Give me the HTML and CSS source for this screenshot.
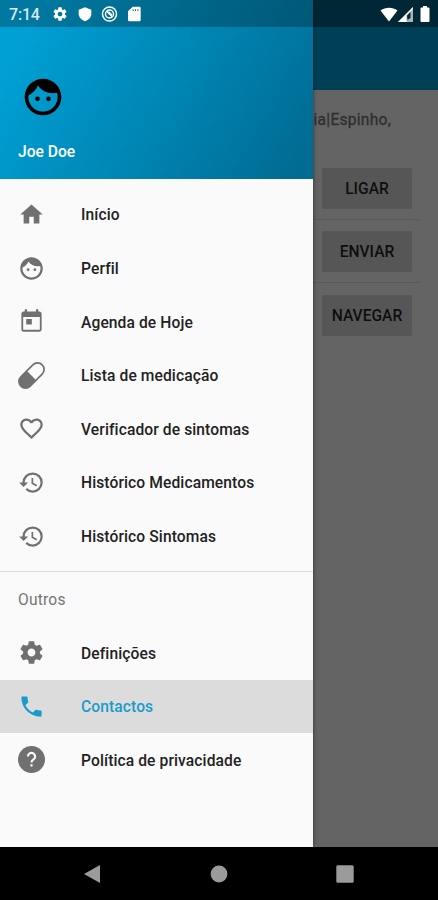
FILE: index.html
```html
<!DOCTYPE html>
<html lang="pt">
<head>
<meta charset="utf-8">
<title>Contactos</title>
<link rel="stylesheet" href="styles.css">
</head>
<body>
<svg class="defs" width="0" height="0">
  <symbol id="face" viewBox="0 0 24 24"><path d="M9 11.75a1.25 1.25 0 1 0 0 2.5 1.25 1.25 0 0 0 0-2.5zm6 0a1.25 1.25 0 1 0 0 2.5 1.25 1.25 0 0 0 0-2.5zM12 2C6.48 2 2 6.48 2 12s4.48 10 10 10 10-4.48 10-10S17.520 2 12 2zm0 18c-4.410 0-8-3.590-8-8 0-.290.020-.580.050-.860 2.360-1.050 4.230-2.980 5.210-5.370C11.070 8.330 14.050 10 17.420 10c.780 0 1.530-.090 2.250-.260.210.710.330 1.470.330 2.260 0 4.410-3.590 8-8 8z"/></symbol>
  <symbol id="gear" viewBox="0 0 24 24"><path d="M19.430 12.980c.040-.320.070-.640.070-.980s-.030-.660-.070-.980l2.110-1.650c.190-.150.240-.420.120-.640l-2-3.460c-.120-.220-.390-.300-.610-.220l-2.490 1c-.520-.400-1.080-.730-1.690-.980l-.380-2.650C14.460 2.180 14.250 2 14 2h-4c-.250 0-.460.180-.490.420l-.380 2.650c-.610.250-1.170.590-1.690.980l-2.490-1c-.230-.090-.490 0-.610.220l-2 3.460c-.130.220-.070.490.120.640l2.110 1.650c-.040.320-.070.650-.070.980s.030.660.070.980l-2.110 1.650c-.190.150-.240.420-.120.640l2 3.460c.120.220.390.300.610.220l2.490-1c.520.400 1.080.730 1.690.980l.380 2.650c.030.240.240.420.490.420h4c.250 0 .460-.180.490-.420l.380-2.650c.610-.250 1.170-.590 1.690-.980l2.490 1c.230.090.490 0 .610-.220l2-3.460c.120-.220.070-.490-.120-.640l-2.110-1.650zM12 15.500c-1.930 0-3.500-1.570-3.500-3.500s1.570-3.500 3.500-3.500 3.500 1.570 3.500 3.500-1.570 3.500-3.500 3.500z"/></symbol>
  <symbol id="history" viewBox="0 0 24 24"><path d="M13 3a9 9 0 0 0-9 9H1l3.890 3.890.070.140L9 12H6c0-3.870 3.130-7 7-7s7 3.130 7 7-3.130 7-7 7c-1.930 0-3.680-.790-4.940-2.060l-1.420 1.420A8.954 8.954 0 0 0 13 21a9 9 0 0 0 0-18zm-1 5v5l4.280 2.540.720-1.210-3.500-2.080V8H12z"/></symbol>
</svg>

<div class="phone">
  <header class="appbar"></header>

  <main class="page">
    <p class="address">ia|Espinho,</p>
    <div class="row"><span class="button">LIGAR</span></div>
    <div class="row"><span class="button">ENVIAR</span></div>
    <div class="row"><span class="button">NAVEGAR</span></div>
  </main>

  <div class="scrim"></div>

  <aside class="drawer">
    <div class="profile">
      <svg class="avatar"><use href="#face"/></svg>
      <div class="name">Joe Doe</div>
    </div>
    <nav class="menu">
      <a class="item"><svg class="icon" viewBox="0 0 24 24"><path d="M10 20v-6h4v6h5v-8h3L12 3 2 12h3v8z"/></svg><span>Início</span></a>
      <a class="item"><svg class="icon face"><use href="#face"/></svg><span>Perfil</span></a>
      <a class="item"><svg class="icon" viewBox="0 0 24 24"><path d="M19 3h-1V1h-2v2H8V1H6v2H5c-1.110 0-2 .900-2 2v14a2 2 0 0 0 2 2h14c1.100 0 2-.900 2-2V5c0-1.100-.900-2-2-2zm.400 16.400H4.600V8h14.800zM7.300 9.700h5v5h-5z"/></svg><span>Agenda de Hoje</span></a>
      <a class="item"><svg class="icon" viewBox="0 0 24 24"><g transform="rotate(-45 12 12)"><rect class="outline" x="-1.400" y="6.150" width="26.800" height="11.700" rx="5.850"/><path d="M12 6.150H4.450a5.850 5.850 0 0 0 0 11.700H12z"/></g></svg><span>Lista de medicação</span></a>
      <a class="item"><svg class="icon" viewBox="0 0 24 24"><path d="M16.500 3c-1.740 0-3.410.810-4.500 2.090C10.910 3.810 9.240 3 7.500 3 4.420 3 2 5.420 2 8.500c0 3.780 3.400 6.860 8.550 11.540L12 21.350l1.450-1.320C18.600 15.360 22 12.280 22 8.500 22 5.420 19.580 3 16.500 3zm-4.400 15.550-.100.100-.100-.100C7.140 14.240 4 11.390 4 8.500 4 6.500 5.500 5 7.500 5c1.540 0 3.040.990 3.570 2.360h1.870C13.460 5.990 14.960 5 16.500 5c2 0 3.500 1.500 3.500 3.500 0 2.890-3.140 5.740-7.900 10.050z"/></svg><span>Verificador de sintomas</span></a>
      <a class="item"><svg class="icon"><use href="#history"/></svg><span>Histórico Medicamentos</span></a>
      <a class="item"><svg class="icon"><use href="#history"/></svg><span>Histórico Sintomas</span></a>
    </nav>
    <div class="group">
      <h2 class="heading">Outros</h2>
      <a class="item"><svg class="icon"><use href="#gear"/></svg><span>Definições</span></a>
      <a class="item active"><svg class="icon" viewBox="0 0 24 24"><path d="M6.620 10.790c1.440 2.830 3.760 5.140 6.590 6.590l2.200-2.200c.270-.270.670-.360 1.020-.240 1.120.370 2.330.570 3.570.570.550 0 1 .450 1 1V20c0 .550-.450 1-1 1-9.390 0-17-7.610-17-17 0-.550.450-1 1-1h3.500c.550 0 1 .450 1 1 0 1.250.200 2.450.570 3.570.110.350.030.740-.250 1.020l-2.200 2.200z"/></svg><span>Contactos</span></a>
      <a class="item"><svg class="icon" viewBox="0 0 24 24"><circle cx="12" cy="12" r="12"/><path class="question" d="M8.800 9.300a3.200 3.200 0 1 1 5.200 2.500c-1.100.900-2 1.300-2 2.900M12 16.300v2"/></svg><span>Política de privacidade</span></a>
    </div>
  </aside>

  <div class="status">
    <span class="time">7:14</span>
    <svg class="notice"><use href="#gear"/></svg>
    <svg class="notice" viewBox="0 0 24 24"><path d="M12 2 2.500 5.500V12c0 5 4.500 9 9.500 11 5-2 9.500-6 9.500-11V5.500z"/></svg>
    <svg class="notice wide" viewBox="0 0 24 24"><circle class="ring" cx="12" cy="12" r="10.500"/><circle class="ring" cx="12" cy="12" r="6"/><path class="ring" d="m8 8 8 8M10.500 8.500l5 5"/></svg>
    <svg class="notice card" viewBox="0 0 24 24"><path fill-rule="evenodd" d="M20 1H10L3 8v13a2 2 0 0 0 2 2h15c1.100 0 2-.900 2-2V3a2 2 0 0 0-2-2zM10 5h1.500v2.500H10zm3.500 0H15v2.500h-1.500zm3.500 0h1.500v2.500H17z"/></svg>
    <div class="signals">
      <svg width="18" height="15" viewBox="0 0 18 15"><path d="M.5 3.500C5.500-.3 12.500-.3 17.500 3.500L9 14.500z"/></svg>
      <svg width="15" height="15" viewBox="0 0 15 15"><path class="dim" d="M15 0v15H0z"/><path d="M8.500 6.500V15H0zM15 0v2L8 9V7z"/><path class="mark" d="M9 8.500 12.500 5v6L9.500 13z"/></svg>
      <svg class="battery" width="10" height="16" viewBox="0 0 10 16"><path d="M3 0h4v1.500h1.500q1 0 1 1V15q0 1-1 1h-7q-1 0-1-1V2.500q0-1 1-1H3z"/></svg>
    </div>
  </div>

  <footer class="navbar">
    <svg width="18" height="20" viewBox="0 0 18 20"><path d="M17 1v18L1 10z"/></svg>
    <svg width="18" height="20" viewBox="0 0 18 20"><circle cx="9" cy="10" r="8.400"/></svg>
    <svg width="18" height="20" viewBox="0 0 18 20"><rect x=".3" y="1.300" width="17.400" height="17.400" rx="1.500"/></svg>
  </footer>
</div>
</body>
</html>
```
FILE: styles.css
```css
* { box-sizing: border-box; }

body {
  margin: 0;
  font-family: Roboto, "Liberation Sans", sans-serif;
}

.defs { position: absolute; }

.phone {
  position: relative;
  display: flex;
  flex-direction: column;
  width: 438px;
  height: 900px;
  overflow: hidden;
  background: #fafafa;
}

.appbar {
  flex: none;
  height: 90px;
  background: linear-gradient(#0086b3 27px, #00a0d7 27px);
}

.page {
  flex: 1;
  padding: 18px 18px 0;
}

.address {
  height: 48px;
  margin: 0;
  padding-right: 29px;
  font-size: 15.6px;
  line-height: 25px;
  letter-spacing: .25px;
  text-align: right;
  color: #757575;
  -webkit-text-stroke: .3px #757575;
}

.row {
  display: flex;
  align-items: center;
  justify-content: flex-end;
  height: 63.600px;
  padding: 2px 8px 0 0;
  border-bottom: 1px solid #dedede;
}

.row:last-child { border-bottom: 0; }

.button {
  width: 90px;
  height: 41px;
  border-radius: 2px;
  background: #d6d7d7;
  color: #000000d9;
  font-size: 15.600px;
  font-weight: 500;
  line-height: 42px;
  text-align: center;
}

.scrim {
  position: absolute;
  inset: 0;
  background: rgba(0, 0, 0, .6);
}

.drawer {
  position: absolute;
  top: 0;
  bottom: 52.600px;
  left: 0;
  width: 313px;
  background: #fafafa;
  box-shadow: 0 0 4px rgba(0, 0, 0, .55);
}

.profile {
  height: 178.700px;
  padding: 75px 18px 0;
  background: linear-gradient(120deg, #00a0d5 10%, #006c94 94%);
  color: #fff;
}

.avatar {
  display: block;
  width: 44px;
  height: 44px;
  margin-left: 3px;
  fill: #000;
}

.name {
  margin-top: 23px;
  font-size: 15.600px;
  font-weight: 500;
  line-height: 20px;
}

.menu { padding: 9px 0 8.500px; }

.item {
  display: flex;
  align-items: center;
  gap: 36px;
  height: 53.600px;
  padding-left: 18px;
  font-size: 15.600px;
  font-weight: 500;
  letter-spacing: .1px;
  color: #222;
}

.item span { padding-top: 2px; }

.icon {
  flex: none;
  width: 27px;
  height: 27px;
  overflow: visible;
  fill: #707070;
}

.outline { fill: none; stroke: #707070; stroke-width: 1.500; }

.question { fill: none; stroke: #fafafa; stroke-width: 1.900; }

.group { border-top: 1.500px solid #dedede; }

.heading {
  height: 53.600px;
  margin: 0;
  padding-left: 18px;
  font-size: 15.600px;
  font-weight: 400;
  line-height: 56px;
  letter-spacing: .2px;
  color: #757575;
}

.active { background: #dcdcdc; color: #1a9ccb; }
.active .icon { fill: #1a9ccb; }

.status {
  position: absolute;
  top: 0;
  left: 0;
  display: flex;
  align-items: center;
  width: 100%;
  height: 27px;
  padding: 1px 8px 0 9px;
  background: rgba(0, 0, 0, .25);
  color: #fff;
}

.status svg { fill: #fff; }

.time {
  width: 43px;
  font-size: 16px;
  font-weight: 500;
  line-height: 26px;
  padding-top: 1px;
  letter-spacing: -.2px;
  color: #d9e9ef;
}

.notice { width: 16px; height: 16px; margin-right: 8.500px; }
.notice.wide { width: 17px; }
.notice.card { margin-left: -1px; }

.ring { fill: none; stroke: #fff; stroke-width: 2.200; }

.signals {
  display: flex;
  align-items: center;
  margin-left: auto;
}

.battery { margin-left: 7px; }

.status .dim { fill: #aab5ba; }
.status .mark { fill: #00293a; }

.navbar {
  position: relative;
  display: flex;
  align-items: center;
  justify-content: space-between;
  height: 52.600px;
  padding: 0 84px 0 83px;
  background: #000;
}

.navbar svg { fill: #9b9b9b; }
```
